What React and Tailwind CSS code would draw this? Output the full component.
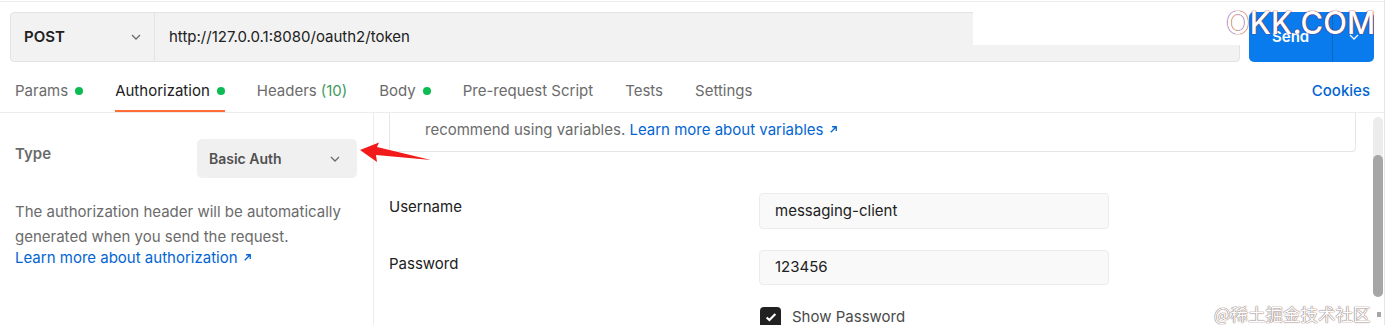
import React from "react";

function Chevron({ className = "" }) {
  return (
    <svg viewBox="0 0 16 16" className={className} fill="none" stroke="currentColor" strokeWidth="1.3">
      <path d="M4 6l4 4 4-4" />
    </svg>
  );
}

function ArrowOut() {
  return (
    <svg viewBox="0 0 12 12" className="inline-block w-[11px] h-[11px] ml-1 -mt-0.5" fill="none" stroke="currentColor" strokeWidth="1.4">
      <path d="M3 9l6-6M4.5 3H9v4.5" />
    </svg>
  );
}

const Dot = () => <span className="inline-block w-2 h-2 rounded-full bg-[#0cbb52] ml-[7px]" />;

function Tab({ children, active, dot }) {
  return (
    <div
      className={`flex items-center pb-[8px] pt-[1px] border-b-2 ${
        active ? "border-[#ff6c37] text-[#212121]" : "border-transparent text-[#6b6b6b]"
      }`}
    >
      {children}
      {dot && <Dot />}
    </div>
  );
}

export default function App() {
  return (
    <div className="relative w-[1390px] h-[325px] overflow-hidden bg-white font-[Inter,sans-serif] text-[15px]">
      <div className="w-[1385px] h-full border-r border-[#e6e6e6] flex flex-col pt-px">
        <div className="border-t border-[#ededed]" />

        {/* request bar */}
        <div className="flex px-[10px] pt-[10px]">
          <div className="flex w-[1231px] h-[50px] bg-[#f2f2f2] border border-[#e3e3e3] rounded-[4px]">
            <div className="w-[144px] flex items-center justify-between pl-[13px] pr-[10px] border-r border-[#e3e3e3]">
              <span className="font-semibold text-[#212121] text-[15px]">POST</span>
              <Chevron className="w-4 h-4 text-[#6b6b6b]" />
            </div>
            <div className="flex items-center pl-[14px] text-[#212121] text-[15px]">http://127.0.0.1:8080/oauth2/token</div>
          </div>
          <div className="ml-[9px] w-[125px] h-[50px] bg-[#097bed] rounded-[5px] flex text-white">
            <div className="w-[84px] flex items-center justify-center font-semibold text-[15px] border-r border-[#0a66c4]">Send</div>
            <div className="flex-1 flex items-center justify-center">
              <Chevron className="w-4 h-4" />
            </div>
          </div>
        </div>

        {/* tabs */}
        <div className="flex items-end justify-between h-[51px] border-b border-[#ededed] pl-[15px] pr-[14px]">
          <div className="flex items-end gap-[32px]">
            <Tab dot>Params</Tab>
            <Tab active dot>Authorization</Tab>
            <Tab>
              Headers <span className="text-[#3f9a5e] ml-1">(10)</span>
            </Tab>
            <Tab dot>Body</Tab>
            <Tab>Pre-request Script</Tab>
            <Tab>Tests</Tab>
            <Tab>Settings</Tab>
          </div>
          <div className="pb-[10px] text-[#0265d2] font-medium">Cookies</div>
        </div>

        {/* body */}
        <div className="flex flex-1 min-h-0">
          <div className="w-[374px] border-r border-[#ededed] pl-[15px] pr-[16px] pt-[26px]">
            <div className="flex items-start justify-between">
              <span className="mt-[4px] font-semibold text-[#6b6b6b]">Type</span>
              <div className="w-[160px] h-[39px] bg-[#f0f0f0] rounded-[5px] flex items-center justify-between pl-[12px] pr-[14px]">
                <span className="font-semibold text-[#505050] text-[14px]">Basic Auth</span>
                <Chevron className="w-4 h-4 text-[#6b6b6b]" />
              </div>
            </div>
            <p className="mt-[21px] text-[#6b6b6b] leading-[25px]">
              The authorization header will be automatically generated when you send the request.
            </p>
            <a className="block -mt-[2px] text-[#0265d2] leading-[22px]">
              Learn more about authorization
              <ArrowOut />
            </a>
          </div>

          <div className="flex-1 pl-[15px] pr-[16px]">
            <div className="w-[967px] h-[39px] pb-[4px] border border-t-0 border-[#e6e6e6] rounded-b-[4px] flex items-center pl-[35px]">
              <span className="text-[#6b6b6b]">recommend using variables.&nbsp;</span>
              <span className="text-[#0265d2]">
                Learn more about variables
                <ArrowOut />
              </span>
            </div>

            <div className="mt-[41px] flex items-start">
              <span className="w-[370px] mt-[3px] text-[#212121]">Username</span>
              <div className="w-[350px] h-[36px] bg-[#f9f9f9] border border-[#ececec] rounded-[4px] flex items-center pl-[15px] text-[#212121]">
                messaging-client
              </div>
            </div>
            <div className="mt-[21px] flex items-start">
              <span className="w-[370px] mt-[3px] text-[#212121]">Password</span>
              <div className="w-[350px] h-[35px] bg-[#f9f9f9] border border-[#ececec] rounded-[4px] flex items-center pl-[15px] text-[#212121]">
                123456
              </div>
            </div>
            <div className="mt-[21px] ml-[371px] flex items-center">
              <span className="w-[21px] h-[21px] bg-[#212121] rounded-[4px] flex items-center justify-center">
                <svg viewBox="0 0 16 16" className="w-[14px] h-[14px]" fill="none" stroke="white" strokeWidth="2.4">
                  <path d="M3 8.5l3.2 3L13 4.5" />
                </svg>
              </span>
              <span className="ml-[11px] text-[#4a4a4a]">Show Password</span>
            </div>
          </div>
        </div>
      </div>

      {/* scrollbar */}
      <div className="absolute left-[1373px] top-[117px] w-[10px] h-[180px] bg-[#ececec] rounded-full" />
      <div className="absolute left-[1373px] top-[155px] w-[10px] h-[142px] bg-[#a6a6a6] rounded-full" />
      <div className="absolute left-[1377px] top-[312px] w-[4px] h-[5px] bg-[#a6a6a6]" />

      {/* red annotation arrow */}
      <svg className="absolute left-0 top-0 pointer-events-none" width="1390" height="325">
        <polygon points="360,150 379,142.5 377,147 431,160 376,155 377,162" fill="#f21a1a" />
      </svg>

      {/* watermark patches */}
      <div className="absolute left-[973px] top-[12px] w-[267px] h-[33px] bg-white" />
      <div className="absolute left-[1226px] top-[7px] text-white text-[31px] leading-none font-medium font-[Inter,sans-serif] [text-shadow:0_0_1px_#8a0f2a,0_0_1px_#8a0f2a]">
        OKK.COM
      </div>
      <div className="absolute left-[1214px] top-[305px] text-white text-[17.5px] leading-none font-['Noto_Sans_CJK_SC',sans-serif] [text-shadow:0_0_1px_#666,0_0_1px_#944]">
        @稀土掘金技术社区
      </div>
    </div>
  );
}
